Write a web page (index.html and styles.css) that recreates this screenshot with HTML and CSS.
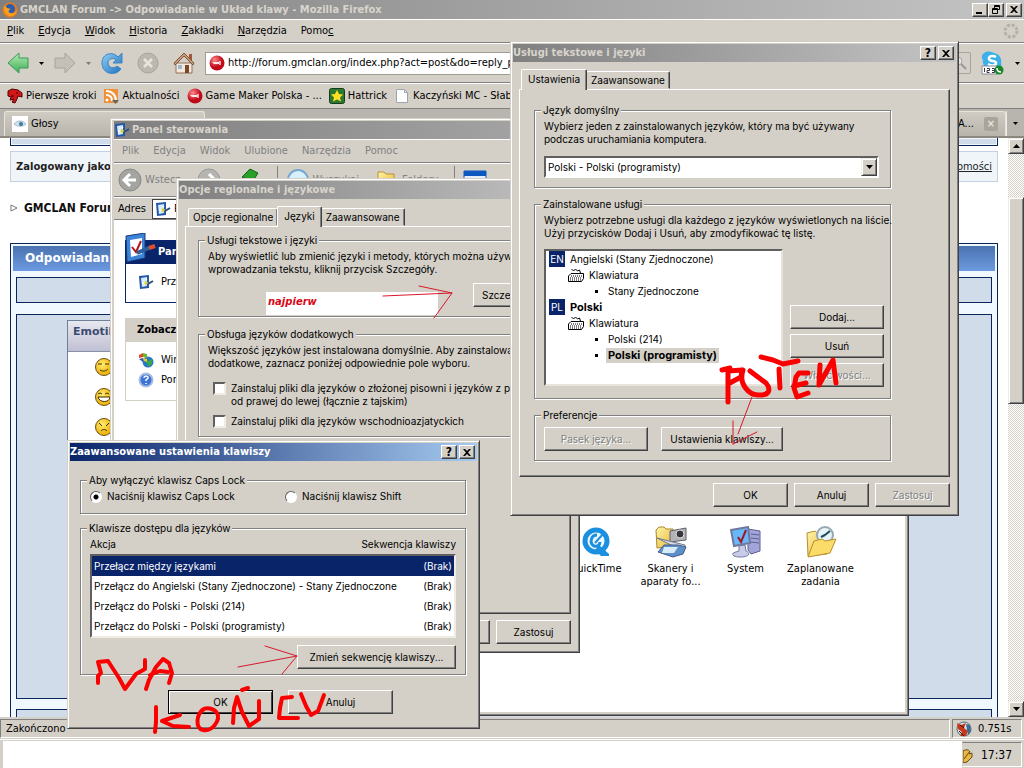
FILE: index.html
```
<!DOCTYPE html>
<html lang="pl">
<head>
<meta charset="utf-8">
<title>GMCLAN Forum</title>
<link rel="stylesheet" href="styles.css">
</head>
<body>
<svg class="defs" aria-hidden="true">
  <defs>
    <linearGradient id="gBlue" x1="0" y1="0" x2="1" y2="1"><stop offset="0" stop-color="#8fd0f5"/><stop offset="1" stop-color="#1f6fc0"/></linearGradient>
    <linearGradient id="gGreen" x1="0" y1="0" x2="0" y2="1"><stop offset="0" stop-color="#b4ecb0"/><stop offset="1" stop-color="#3fae58"/></linearGradient>
    <radialGradient id="gRed" cx=".35" cy=".3"><stop offset="0" stop-color="#ff8a90"/><stop offset="1" stop-color="#c00818"/></radialGradient>
    <radialGradient id="gFace" cx=".4" cy=".35"><stop offset="0" stop-color="#ffee70"/><stop offset="1" stop-color="#f0b818"/></radialGradient>
    <linearGradient id="gFold" x1="0" y1="0" x2="1" y2="1"><stop offset="0" stop-color="#fff3a8"/><stop offset="1" stop-color="#e8b83c"/></linearGradient>
    <symbol id="cross" viewBox="0 0 10 9"><path d="M1 1h2l2 2 2-2h2L6 4.500l3 3.500H7L5 6 3 8H1l3-3.500z" fill="#000"/></symbol>
    <symbol id="down" viewBox="0 0 5 3"><path d="M0 0h5L2.500 3z" fill="#000"/></symbol>
    <symbol id="panel" viewBox="0 0 16 16"><path d="M1 2l10-1v13L2 15z" fill="#2458a8"/><path d="M3 4l6-1v9l-5 1z" fill="#d8ecfc"/><path d="M4 8l2 2 3-5" stroke="#fff" fill="none"/><path d="M7 8l1-2 1 2 2 1-2 1-1 2-1-2-1-1z" fill="#d8d040"/><path d="M10 10l5-3" stroke="#2c4c80" stroke-width="2"/></symbol>
    <symbol id="ball" viewBox="0 0 16 16"><circle cx="8" cy="8" r="7.500" fill="url(#gRed)"/><path d="M3 7h7v2H5z" fill="#ffe8e8"/><path d="M11 6v4" stroke="#ffe0e0" stroke-width="1.500"/></symbol>
    <symbol id="kbd" viewBox="0 0 16 14"><path d="M3.500 1l2 2 2-2 2 2 2-1 1 3" fill="none" stroke="#000"/><path d="M3 5.500h12.500v5l-2 3H.5V8z" fill="#fff" stroke="#000"/><path d="M3 8h11M2 10h11M2 12h11" stroke="#000" stroke-dasharray="1 1"/></symbol>
  </defs>
</svg>

<main class="browser">
  <header class="title inactive browser-title">
    <svg class="i16" viewBox="0 0 16 16"><circle cx="8" cy="8" r="7.500" fill="#e87818"/><circle cx="8" cy="7" r="5" fill="#2c5cb0"/><path d="M3 3c-2 4-1 9 4 11 4 1 8-2 8-7-1 4-4 5-7 4-2-1-2-3 1-4L5 6z" fill="#f8a020"/></svg>
    <h1>GMCLAN Forum -&gt; Odpowiadanie w Układ klawy - Mozilla Firefox</h1>
    <span class="caps">
      <button aria-label="Minimalizuj"><svg class="i10" viewBox="0 0 10 9"><path d="M1 7h6v2H1z"/></svg></button><button aria-label="Przywróć"><svg class="i10" viewBox="0 0 10 9"><path d="M3.500.5h5v4h-2M3.500 3V.5M3 1.500h6" fill="none" stroke="#000"/><path d="M1.500 3.500h5v5h-5zM1 4.500h6" fill="none" stroke="#000"/></svg></button><button class="close" aria-label="Zamknij"><svg class="i10"><use href="#cross"/></svg></button>
    </span>
  </header>
  <nav class="menubar">
    <a href="#"><u>P</u>lik</a><a href="#"><u>E</u>dycja</a><a href="#"><u>W</u>idok</a><a href="#"><u>H</u>istoria</a><a href="#"><u>Z</u>akładki</a><a href="#"><u>N</u>arzędzia</a><a href="#">Pomo<u>c</u></a>
    <svg class="throbber" viewBox="0 0 16 16"><circle cx="8" cy="8" r="6" fill="none" stroke="#b4b0a8" stroke-width="3" stroke-dasharray="3 1.700"/></svg>
  </nav>
  <div class="navbar">
    <button aria-label="Wstecz"><svg class="i22" viewBox="0 0 22 22"><path d="M1 11L12 1v5h9v10h-9v5z" fill="url(#gGreen)" stroke="#3a9858"/></svg></button>
    <button aria-label="Historia wstecz"><svg class="dd"><use href="#down"/></svg></button>
    <button aria-label="Dalej"><svg class="i22" viewBox="0 0 22 22"><path d="M21 11L11 1v5H1v10h10v5z" fill="#c4c0b8" stroke="#a8a49c"/></svg></button>
    <button aria-label="Historia dalej"><svg class="dd dim"><use href="#down"/></svg></button>
    <button class="wide" aria-label="Odśwież"><svg class="i22" viewBox="0 0 22 22"><path d="M17 5l4-4v10H12l3-3c-3-3-8-1-8 3 0 5 6 6 9 3l4 3C14 25 1 22 1 11 1 1 12-1 17 5z" fill="url(#gBlue)" stroke="#3a84c4"/></svg></button>
    <button class="wide" aria-label="Zatrzymaj"><svg class="i22" viewBox="0 0 22 22"><circle cx="11" cy="11" r="10" fill="#bcb8b0" stroke="#a8a49c"/><path d="M7 7l8 8M15 7l-8 8" stroke="#e8e4dc" stroke-width="2.500"/></svg></button>
    <button aria-label="Strona startowa"><svg class="i22" viewBox="0 0 22 22"><path d="M3 11h16v10H3z" fill="#f4e8dc" stroke="#907058"/><path d="M16 2h3v6h-3z" fill="#a05838"/><path d="M11 1L1 11l1 2 9-9 9 9 1-2z" fill="#c89878" stroke="#805840"/><path d="M12 13h4v8h-4z" fill="#784828"/><path d="M5 13h4v4H5z" fill="#98b8d8"/></svg></button>
    <label class="url"><svg class="i16"><use href="#ball"/></svg><input aria-label="Adres" value="http://forum.gmclan.org/index.php?act=post&amp;do=reply_post"></label>
    <button class="search" aria-label="Szukaj"><svg class="i16" viewBox="0 0 16 16"><circle cx="6" cy="6" r="4" fill="#e4e4e4" stroke="#a4a4a4"/><path d="M9 9l5 5" stroke="#989898" stroke-width="2"/></svg></button>
    <button aria-label="Skype"><svg class="i24" viewBox="0 0 24 24"><path d="M2 3c4-4 9-2 11-1 6 1 8 6 7 10 2 6-4 8-8 6C4 19 1 13 2 9 0 7 1 4 2 3z" fill="#3cb0e8"/><path d="M15 6c-3-2-8-1-7 2s7 1 7 4-5 3-8 1" fill="none" stroke="#fff" stroke-width="2.500"/><path d="M1 15h15v8H1z" fill="#fff" stroke="#889"/><path d="M3.500 17v4M6 17.500h2.500v2H6v2h2.500M11 17.500h2.500v4H11M11 19.500h2.500" fill="none" stroke="#334"/><circle cx="18" cy="19" r="4.500" fill="#188828"/><path d="M16 17c0 3 1 4 4 4" stroke="#fff" stroke-width="1.500" fill="none"/></svg></button>
    <button aria-label="Menu Skype"><svg class="dd"><use href="#down"/></svg></button>
  </div>
  <nav class="bookmarks">
    <a href="#"><svg class="i16" viewBox="0 0 16 16"><path d="M1 3l4-2 6 1 4 3v4l-4-1-1 3-2 4-3-1 2-3-4 1 1-3-3-1z" fill="#d01818" stroke="#500"/><path d="M9 5h2M4 8h3" stroke="#300"/></svg>Pierwsze kroki</a>
    <a href="#"><svg class="i16" viewBox="0 0 16 16"><path d="M1 1h14v14H1z" fill="#f09038"/><circle cx="4" cy="12" r="1.500" fill="#fff"/><path d="M3 7c4 0 6 2 6 6M3 3c6 0 10 4 10 10" fill="none" stroke="#fff" stroke-width="2"/><path d="M9 12h7l-3.500 4z" fill="#666"/></svg>Aktualności</a>
    <a href="#"><svg class="i16"><use href="#ball"/></svg>Game Maker Polska - ...</a>
    <a href="#"><svg class="i16" viewBox="0 0 16 16"><rect x=".5" y=".5" width="15" height="15" rx="2" fill="#2c7830" stroke="#143c18"/><path d="M8 2l2 4 4 .5-3 3 1 4-4-2-4 2 1-4-3-3L6 6z" fill="#ffe020"/></svg>Hattrick</a>
    <a href="#"><svg class="i16" viewBox="0 0 16 16"><path d="M2.500 1.500h8l3 3v10h-11z" fill="#fff" stroke="#a0a4b0"/><path d="M10.500 1.500v3h3" fill="none" stroke="#a0a4b0"/></svg>Kaczyński MC - Słaby</a>
  </nav>
  <div class="tabstrip">
    <a class="fftab" href="#"><svg class="i16" viewBox="0 0 16 16"><path d="M0 0h16v16H0z" fill="#fff"/><path d="M2 8c3-4 9-4 12 0-3 3-9 3-12 0z" fill="#cfe0ec" stroke="#a8bccc"/><circle cx="9" cy="8" r="2" fill="#3878a0"/></svg>Głosy</a>
    <span class="fftab last"><b>A...</b><button class="tabclose" aria-label="Zamknij kartę">×</button></span>
    <button class="tablist" aria-label="Lista kart"><svg class="dd"><use href="#down"/></svg></button>
  </div>
  <div class="viewport">
    <section class="forum">
      <div class="strip top"></div>
      <div class="login"><strong>Zalogowany jako</strong><a href="#">Wiadomości</a></div>
      <p class="crumb"><svg class="tri" viewBox="0 0 8 8"><path d="M1 1l6 3-6 3z" fill="none" stroke="#777"/></svg>GMCLAN Forum</p>
      <div class="post">
        <h2>Odpowiadanie</h2>
        <div class="cell thin"></div>
        <div class="cell big">
          <div class="emo">
            <h3>Emotikony</h3>
            <svg class="face" viewBox="0 0 18 18"><circle cx="9" cy="9" r="8.500" fill="url(#gFace)" stroke="#6c5010"/><path d="M3 6h4M10 6h4M5 12c3 2 6 1 8-1" fill="none" stroke="#402c00"/></svg>
            <svg class="face" viewBox="0 0 18 18"><circle cx="9" cy="9" r="8.500" fill="url(#gFace)" stroke="#6c5010"/><path d="M3 6l2-1 2 1M10 6l2-1 2 1" fill="none" stroke="#402c00"/><path d="M3 9h12c0 6-11 6-12 0z" fill="#fff" stroke="#402c00"/></svg>
            <svg class="face" viewBox="0 0 18 18"><circle cx="9" cy="9" r="8.500" fill="url(#gFace)" stroke="#6c5010"/><path d="M4 5l3 3M14 5l-3 3M6 13c2-2 4-2 6 0" fill="none" stroke="#402c00"/></svg>
          </div>
        </div>
        <div class="cell foot"></div>
      </div>
    </section>
    <div class="scroll">
      <button aria-label="W górę"><svg class="ar" viewBox="0 0 7 4"><path d="M0 4h7L3.500 0z"/></svg></button>
      <span class="gap"></span><span class="thumb"></span><span class="rest"></span>
      <button aria-label="W dół"><svg class="ar" viewBox="0 0 7 4"><path d="M0 0h7L3.500 4z"/></svg></button>
    </div>
  </div>
  <footer class="status"><span class="sunk msg">Zakończono</span><span class="sunk time"><svg class="i16" viewBox="0 0 16 16"><circle cx="8" cy="8" r="7" fill="#d8e4ec" stroke="#506878"/><path d="M1 2l4 2 5-2-2 5 4 3-2 5H4l2-4-4-3z" fill="#c83818"/><path d="M10 3l4 1 1 6-3 4-1-5z" fill="#3c6c90"/><path d="M3 10l5 5M4 4l4 3" stroke="#301008"/></svg>0.751s</span></footer>
</main>
<footer class="taskbar"><div class="blank"></div><div class="tray"><svg class="pen" viewBox="0 0 10 16"><path d="M0 4c5-3 8 0 6 3l3-1v4l-5 5-4 1z" fill="#e8b840" stroke="#684c18"/><path d="M1 12l6-8" stroke="#684c18"/></svg><time>17:37</time></div></footer>

<section class="win cpanel">
  <header class="title inactive"><svg class="i16"><use href="#panel"/></svg><h2>Panel sterowania</h2></header>
  <nav class="menubar dimmed"><a href="#">Plik</a><a href="#">Edycja</a><a href="#">Widok</a><a href="#">Ulubione</a><a href="#">Narzędzia</a><a href="#">Pomoc</a></nav>
  <div class="cptools">
    <span class="tool"><svg class="i24" viewBox="0 0 24 24"><circle cx="12" cy="12" r="11" fill="#a4a4a0" stroke="#888"/><path d="M18 12H7M12 6l-6 6 6 6" fill="none" stroke="#fff" stroke-width="3"/></svg>Wstecz</span>
    <span class="tool fwd"><svg class="i24" viewBox="0 0 24 24"><circle cx="12" cy="12" r="11" fill="#b4b4b0" stroke="#999"/><path d="M6 12h11M12 6l6 6-6 6" fill="none" stroke="#fff" stroke-width="3"/></svg></span>
    <span class="tool up"><svg class="i24" viewBox="0 0 24 24"><path d="M2 10h20v12H2z" fill="#e8c850"/><path d="M5 9l8-8 8 4-5 8z" fill="#28a028" stroke="#146014"/></svg></span>
    <span class="tool sep"><svg class="i24" viewBox="0 0 24 24"><circle cx="12" cy="12" r="10" fill="#d8f0fc" stroke="#78a8d0" stroke-width="2"/></svg>Wyszukaj</span>
    <span class="tool"><svg class="i24" viewBox="0 0 24 24"><path d="M3 4h6l2 2h8v14H3z" fill="url(#gFold)" stroke="#b89030"/></svg>Foldery</span>
    <span class="tool sep"><svg class="i24" viewBox="0 0 24 24"><path d="M1 3h22v18H1z" fill="#e4ecf8" stroke="#0c58c0"/><path d="M1 3h22v5H1z" fill="#0c58c0"/></svg></span>
  </div>
  <div class="address"><label for="addr">Adres</label><span class="addrbox"><svg class="i16"><use href="#panel"/></svg><input id="addr" value="Panel sterowania"></span></div>
  <div class="cpbody">
    <aside class="side">
      <section class="navy"><svg class="big" viewBox="0 0 31 30"><path d="M1 3L20 0v25L2 29z" fill="#3c84d8" stroke="#18387c"/><path d="M5 7l12-2v16L6 24z" fill="#fff"/><path d="M7 14l4 5 5-11" fill="none" stroke="#b01818" stroke-width="2"/><path d="M12 20l14-6" stroke="#2c60a0" stroke-width="4"/><path d="M24 15l6-2" stroke="#e05028" stroke-width="4"/></svg><h3>Panel sterowania</h3><a href="#"><svg class="i16"><use href="#panel"/></svg>Przełącz do widoku</a></section>
      <section class="grey"><h3>Zobacz też</h3><a href="#"><svg class="i16" viewBox="0 0 16 16"><circle cx="10" cy="10" r="5.500" fill="#2878c8"/><path d="M7 8l4 1 3-2v5l-3 3z" fill="#38a848"/><path d="M1 3l4-2v4L1 6z" fill="#e04820"/><path d="M5 1l4 1v4L5 5z" fill="#68b830"/><path d="M1 7l4-1v4z" fill="#2c58c0"/><path d="M5 6l4 1v3L6 9z" fill="#f0c820"/></svg>Windows Update</a><a href="#"><svg class="i16" viewBox="0 0 16 16"><circle cx="8" cy="8" r="6.500" fill="#3c74d8" stroke="#a8bce0" stroke-width="2"/><path d="M6 6c0-3 5-2 4 0L8 8v1M8 11v1" fill="none" stroke="#fff" stroke-width="1.500"/></svg>Pomoc i obsługa</a></section>
    </aside>
    <div class="icons">
      <a href="#"><svg class="i32" viewBox="0 0 32 32"><circle cx="16" cy="15" r="11" fill="#eef8ff" stroke="#1c90e0" stroke-width="5"/><path d="M19 19l10 9v2h-8l-6-6z" fill="#1c90e0"/><path d="M17 9c-6 0-8 8-3 11 3 1 6-1 6-4" fill="none" stroke="#1c90e0" stroke-width="3"/><path d="M15 17l8-9" stroke="#1c90e0" stroke-width="2"/></svg>QuickTime</a>
      <a href="#"><svg class="i32" viewBox="0 0 32 32"><path d="M1 4l3-3h5l2 2h7v17L2 22z" fill="url(#gFold)" stroke="#a88828"/><path d="M15 5l16-3v12l-16 2z" fill="#b4b4b8" stroke="#606068"/><circle cx="25" cy="8" r="4" fill="#38383c" stroke="#ddd"/><path d="M2 12l28 7v3l-10-1z" fill="#d8dce4" stroke="#707888"/><path d="M3 26l6-7h14l8 2-3 7-10 3z" fill="#5c90c8" stroke="#445c80"/><path d="M9 21h14l-4 6H7z" fill="#d8ecf8"/></svg>Skanery i aparaty fo...</a>
      <a href="#"><svg class="i32" viewBox="0 0 32 32"><path d="M18 3l12 2v20l-9 3-3-4z" fill="#a0a4d8" stroke="#5c6090"/><path d="M21 8l8 1M21 12l8 1M21 16l8 1" stroke="#5c6090"/><path d="M1 4l17-3 2 16-16 3z" fill="#68b8f8" stroke="#7078a0" stroke-width="2"/><path d="M8 11l3 5 5-12" fill="none" stroke="#a01828" stroke-width="2"/><path d="M9 20l6-1 1 6c8 4-3 8-12 5-4-3 2-4 5-5z" fill="#c8cce8" stroke="#7078a0"/></svg>System</a>
      <a href="#"><svg class="i32" viewBox="0 0 32 32"><path d="M2 7l8-2 3 3h9v20L3 30z" fill="url(#gFold)" stroke="#b89030"/><circle cx="20" cy="9" r="8" fill="#e4f4f8" stroke="#98a8b0" stroke-width="2"/><path d="M20 9l5-4M20 9l-4 2" stroke="#204858" stroke-width="2"/><path d="M9 15l8-2 3 2 11-2-6 14-22 4z" fill="#fbdc68" stroke="#b89030"/></svg>Zaplanowane zadania</a>
    </div>
  </div>
</section>

<section class="win dlg regional">
  <header class="title inactive"><h2>Opcje regionalne i językowe</h2></header>
  <div class="dbody">
    <div class="tabs"><button>Opcje regionalne</button><button class="on">Języki</button><button>Zaawansowane</button></div>
    <div class="page">
      <fieldset><legend>Usługi tekstowe i języki</legend>
        <p>Aby wyświetlić lub zmienić języki i metody, których można używać do<br>wprowadzania tekstu, kliknij przycisk Szczegóły.</p>
        <div class="right"><button class="btn w75">Szczegóły...</button></div>
      </fieldset>
      <fieldset class="extra"><legend>Obsługa języków dodatkowych</legend>
        <p>Większość języków jest instalowana domyślnie. Aby zainstalować<br>dodatkowe, zaznacz poniżej odpowiednie pole wyboru.</p>
        <label class="opt"><input type="checkbox"><span>Zainstaluj pliki dla języków o złożonej pisowni i języków z pisownią<br>od prawej do lewej (łącznie z tajskim)</span></label>
        <label class="opt"><input type="checkbox"><span>Zainstaluj pliki dla języków wschodnioazjatyckich</span></label>
      </fieldset>
    </div>
    <div class="actions"><button class="btn w75">Anuluj</button><button class="btn w75">Zastosuj</button></div>
  </div>
</section>

<section class="win dlg services">
  <header class="title inactive"><h2>Usługi tekstowe i języki</h2><span class="caps"><button aria-label="Pomoc"><b>?</b></button><button class="close" aria-label="Zamknij"><svg class="i10"><use href="#cross"/></svg></button></span></header>
  <div class="dbody">
    <div class="tabs"><button class="on">Ustawienia</button><button>Zaawansowane</button></div>
    <div class="page">
      <fieldset><legend>Język domyślny</legend>
        <p>Wybierz jeden z zainstalowanych języków, który ma być używany<br>podczas uruchamiania komputera.</p>
        <div class="combo"><select aria-label="Język domyślny"><option>Polski - Polski (programisty)</option></select><span class="arrow"><svg class="ar" viewBox="0 0 7 4"><path d="M0 0h7L3.500 4z"/></svg></span></div>
      </fieldset>
      <fieldset><legend>Zainstalowane usługi</legend>
        <p>Wybierz potrzebne usługi dla każdego z języków wyświetlonych na liście.<br>Użyj przycisków Dodaj i Usuń, aby zmodyfikować tę listę.</p>
        <div class="split">
          <ul class="tree">
            <li><i class="lang">EN</i>Angielski (Stany Zjednoczone)</li>
            <li class="l2"><svg class="kb"><use href="#kbd"/></svg>Klawiatura</li>
            <li class="l3"><i class="dot"></i><span>Stany Zjednoczone</span></li>
            <li><i class="lang">PL</i><b>Polski</b></li>
            <li class="l2"><svg class="kb"><use href="#kbd"/></svg>Klawiatura</li>
            <li class="l3"><i class="dot"></i><span>Polski (214)</span></li>
            <li class="l3"><i class="dot"></i><b class="sel">Polski (programisty)</b></li>
          </ul>
          <div class="col"><button class="btn">Dodaj...</button><button class="btn">Usuń</button><button class="btn" disabled>Właściwości...</button></div>
        </div>
      </fieldset>
      <fieldset><legend>Preferencje</legend>
        <div class="prefs"><button class="btn w104" disabled>Pasek języka...</button><button class="btn w122">Ustawienia klawiszy...</button></div>
      </fieldset>
    </div>
    <div class="actions"><button class="btn w75">OK</button><button class="btn w75">Anuluj</button><button class="btn w75" disabled>Zastosuj</button></div>
  </div>
</section>

<section class="win dlg keys">
  <header class="title active"><h2>Zaawansowane ustawienia klawiszy</h2><span class="caps"><button aria-label="Pomoc"><b>?</b></button><button class="close" aria-label="Zamknij"><svg class="i10"><use href="#cross"/></svg></button></span></header>
  <div class="kbody">
    <fieldset><legend>Aby wyłączyć klawisz Caps Lock</legend>
      <div class="radios"><label><input type="radio" name="caps" checked>Naciśnij klawisz Caps Lock</label><label><input type="radio" name="caps">Naciśnij klawisz Shift</label></div>
    </fieldset>
    <fieldset><legend>Klawisze dostępu dla języków</legend>
      <table>
        <thead><tr><th>Akcja</th><th>Sekwencja klawiszy</th></tr></thead>
        <tbody>
          <tr class="on"><td>Przełącz między językami</td><td>(Brak)</td></tr>
          <tr><td>Przełącz do Angielski (Stany Zjednoczone) - Stany Zjednoczone</td><td>(Brak)</td></tr>
          <tr><td>Przełącz do Polski - Polski (214)</td><td>(Brak)</td></tr>
          <tr><td>Przełącz do Polski - Polski (programisty)</td><td>(Brak)</td></tr>
        </tbody>
      </table>
      <div class="right"><button class="btn w159">Zmień sekwencję klawiszy...</button></div>
    </fieldset>
    <div class="okrow"><button class="btn w105 default">OK</button><button class="btn w105">Anuluj</button></div>
  </div>
</section>

<div class="note">najpierw</div>
<svg class="ink" viewBox="0 0 1024 768" fill="none" stroke-linecap="round" stroke-linejoin="round">
  <g stroke="#d81828" stroke-width="1">
    <path d="M383 296L452 293M419 286L452 293L434 318"/>
    <path d="M238 667L297 656M265 646L297 656L282 674"/>
    <path d="M752 397L738 434M757 432L733 444M733 421V444"/>
  </g>
  <g stroke="#fa0000" stroke-width="4">
    <path d="M98 683V676L101 673L98 662L108 661L119 678L125 689L136 674L145 669V660"/>
    <path d="M146 689L149 680L156 667L163 659L169 663L172 673L169 683M150 675L160 671L168 672"/>
    <path d="M156 707V722L155 732M180 715L162 721L173 726L189 727"/>
    <path d="M204 709C196 714 195 728 203 730C212 732 221 720 217 713C214 708 206 707 202 710"/>
    <path d="M233 723L234 708L237 697L242 712L249 726L259 719V701M242 690L248 688"/>
    <path d="M292 697L282 698L280 708L279 718H298M301 694L306 706L311 715L318 711L324 695"/>
  </g>
  <g stroke="#fa0000" stroke-width="5">
    <path d="M722 370L730 368M728 370V402M729 371L742 370L741 377L728 384"/>
    <path d="M743 370C738 385 750 395 758 395C770 396 771 389 766 383L750 371"/>
    <path d="M761 357L773 360L783 364L798 361M779 369L780 388"/>
    <path d="M808 373H799L796 377L794 388L797 397L808 393M794 386L806 383"/>
    <path d="M820 365L819 385L833 360L836 383"/>
  </g>
</svg>
</body>
</html>
```
FILE: styles.css
```
* { box-sizing: border-box; }
html, body { height: 100%; }
body {
  margin: 0;
  display: flex;
  flex-direction: column;
  position: relative;
  overflow: hidden;
  background: #d4d0c8;
  color: #000;
  font: 11px/14px "DejaVu Sans Condensed", "DejaVu Sans", sans-serif;
}
h1, h2, h3, p, ul { margin: 0; padding: 0; font-size: 11px; }
p { font-weight: normal; }
a { color: inherit; text-decoration: none; }
button, input, select { font: inherit; color: inherit; margin: 0; }
button { border: 0; padding: 0; background: none; display: flex; align-items: center; justify-content: center; }
svg { flex: none; display: block; }
.defs { position: absolute; width: 0; height: 0; }
.i10 { width: 10px; height: 9px; }
.i16 { width: 16px; height: 16px; }
.i22 { width: 22px; height: 22px; }
.i24 { width: 24px; height: 24px; }
.i32 { width: 32px; height: 32px; }
.dd { width: 5px; height: 3px; }
.dim { opacity: .4; }
.ar { width: 7px; height: 4px; }

/* title bars */
.title { display: flex; align-items: center; flex: none; height: 18px; padding: 0 2px 0 0; white-space: nowrap; }
.title h1, .title h2 { flex: 1; font-weight: bold; }
.title .i16 { margin-right: 2px; }
.inactive { background: linear-gradient(90deg, #808080, #c4c4c4); color: #d8d4cc; }
.active { background: linear-gradient(90deg, #0a246a, #a6caf0); color: #fff; }
.caps { display: flex; color: #000; }
.caps button {
  width: 16px; height: 14px; background: #d4d0c8;
  border: 1px solid; border-color: #fff #404040 #404040 #fff;
  box-shadow: inset -1px -1px #808080;
}
.caps b { font: bold 12px/12px "DejaVu Sans Condensed", sans-serif; }
.caps .close { margin-left: 2px; }

/* browser */
.browser { flex: 1; min-height: 0; display: flex; flex-direction: column; }
.browser-title { height: 19px; padding: 0 2px; }
.menubar { display: flex; align-items: center; gap: 14px; height: 24px; flex: none; padding: 0 5px 0 7px; border-top: 1px solid #fff; border-bottom: 1px solid #808080; }
.throbber { width: 16px; height: 16px; margin-left: auto; }
.navbar { display: flex; align-items: center; gap: 10px; height: 40px; flex: none; padding: 0 4px 0 7px; border-top: 1px solid #fff; border-bottom: 1px solid #808080; }
.navbar .wide { margin-right: 4px; }
.url { flex: 1; display: flex; align-items: center; gap: 3px; height: 23px; padding-left: 3px; background: #fff; border: 1px solid #a09c94; }
.url input { flex: 1; border: 0; padding: 0; background: none; outline: 0; }
.navbar .search { width: 22px; height: 22px; border: 1px solid #a8a49c; border-radius: 2px; }
.bookmarks { display: flex; align-items: center; gap: 7px; height: 26px; flex: none; padding: 0 7px; border-top: 1px solid #fff; border-bottom: 1px solid #808080; white-space: nowrap; }
.bookmarks a { display: flex; align-items: center; gap: 3px; }
.tabstrip { display: flex; align-items: flex-end; height: 29px; flex: none; padding-left: 4px; background: #b8b4ae; border-bottom: 2px solid #8c8880; }
.fftab { display: flex; align-items: center; gap: 3px; width: 201px; height: 25px; padding: 0 7px; border: 1px solid #e8e4dc; border-bottom: 0; border-radius: 3px 3px 0 0; background: linear-gradient(#d0ccc4, #b8b4ac); }
.fftab.last { margin-left: auto; width: 100px; justify-content: flex-end; gap: 10px; }
.fftab b { font-weight: normal; }
.tabclose { width: 14px; height: 14px; border-radius: 2px; background: #a8a49c; color: #e8e4dc; font-weight: bold; }
.tablist { width: 18px; height: 25px; border-left: 1px solid #f0ece4; }
.viewport { flex: 1; min-height: 0; display: flex; background: #fff; }
.forum { flex: 1; display: flex; flex-direction: column; padding: 0 10px; }
.strip.top { height: 8px; border: 1px solid #0c2458; border-top: 0; background: #d0dcea; box-shadow: inset 0 0 0 1px #f0f8ff; }
.login { display: flex; justify-content: space-between; align-items: center; height: 31px; margin-top: 5px; padding: 0 5px; background: #f0f5fa; border: 1px solid #c2d0e0; color: #222; }
.login strong { font: bold 10px/14px "DejaVu Sans", sans-serif; }
.login a { text-decoration: underline; }
.crumb { display: flex; align-items: center; gap: 6px; padding: 19px 0 28px; font: bold 12px/14px "DejaVu Sans Condensed", sans-serif; color: #111; }
.tri { width: 8px; height: 8px; }
.post { flex: 1; display: flex; flex-direction: column; padding: 2px 2px 0; border: 1px solid #0c2458; border-bottom: 0; background: #f0f8ff; }
.post h2 { height: 25px; padding: 0 12px; font: bold 12px/25px "DejaVu Sans", sans-serif; color: #fff; background: linear-gradient(#4a72b0, #6c9ae0); }
.cell { border: 1px solid #0c2458; background: #d0dcea; margin: 0 3px; }
.thin { height: 26px; margin-top: 6px; }
.big { flex: 1; margin-top: 11px; padding: 5px 50px; }
.foot { height: 8px; margin-top: 10px; border-bottom: 0; }
.emo { width: 180px; height: 100%; border: 1px solid #708098; border-bottom: 0; background: #fff; }
.emo h3 { height: 31px; padding: 0 5px; font: bold 11px/22px "DejaVu Sans", sans-serif; color: #3c4c70; background: linear-gradient(#e8e8f0, #c0c0d4); border-bottom: 1px solid #8890a8; }
.face { width: 18px; height: 18px; margin: 6px 0 12px 27px; }
.scroll { width: 16px; display: flex; flex-direction: column; background: repeating-conic-gradient(#fff 0 25%, #d4d0c8 0 50%) 0 0/2px 2px; }
.scroll button, .thumb, .arrow { background: #d4d0c8; border: 1px solid; border-color: #f0ece4 #404040 #404040 #f0ece4; box-shadow: inset 1px 1px #fff, inset -1px -1px #808080; }
.scroll button { height: 16px; }
.gap { flex: 43; }
.thumb { flex: 206; }
.rest { flex: 298; }
.status { display: flex; gap: 2px; height: 22px; flex: none; padding: 2px 2px 1px 0; }
.sunk { display: flex; align-items: center; border: 1px solid; border-color: #808080 #fff #fff #808080; padding: 0 5px; }
.msg { flex: 1; }
.time { width: 70px; padding: 0 3px; gap: 6px; }
.taskbar { height: 29px; flex: none; display: flex; padding: 1px 2px 0 3px; border-top: 1px solid #fff; }
.blank { flex: 1; background: #fff; }
.tray { display: flex; align-items: center; gap: 8px; width: 60px; margin: 1px 0; padding-right: 8px; border: 1px solid; border-color: #808080 #fff #fff transparent; }
.tray time { font-size: 12px; }
.pen { width: 10px; height: 16px; }

/* floating windows */
.win { position: absolute; display: flex; flex-direction: column; padding: 2px; background: #d4d0c8; border: 1px solid; border-color: #d4d0c8 #404040 #404040 #d4d0c8; box-shadow: inset 1px 1px #fff, inset -1px -1px #808080; }
.cpanel { left: 110px; top: 118px; width: 799px; height: 598px; padding: 2px 3px 3px; }
.regional { left: 176px; top: 178px; width: 404px; height: 475px; }
.services { left: 510px; top: 41px; width: 449px; }
.keys { left: 67px; top: 440px; width: 413px; }

/* control panel */
.cpanel .menubar { padding-left: 8px; }
.dimmed { color: #808080; }
.cptools { display: flex; align-items: center; height: 34px; flex: none; padding: 0 4px; gap: 16px; color: #808080; border-bottom: 1px solid #808080; border-top: 1px solid #fff; }
.tool { display: flex; align-items: center; gap: 3px; }
.sep { border-left: 1px solid #808080; padding-left: 8px; height: 28px; }
.address { display: flex; align-items: center; gap: 6px; height: 23px; flex: none; padding: 0 4px; border-bottom: 1px solid #808080; border-top: 1px solid #fff; }
.addrbox { flex: 1; display: flex; align-items: center; gap: 3px; height: 20px; padding-left: 2px; background: #fff; border: 1px solid #404040; }
.addrbox input { flex: 1; border: 0; padding: 0; background: none; }
.cpbody { flex: 1; display: flex; background: #fff; }
.side { width: 186px; padding: 20px 0 0 11px; display: flex; flex-direction: column; gap: 15px; }
.side section { border: 1px solid #0a246a; padding-bottom: 10px; position: relative; }
.side h3 { margin: -1px -1px 8px; height: 24px; line-height: 24px; padding-left: 33px; background: #0a246a; color: #fff; white-space: nowrap; }
.side a { display: flex; align-items: center; gap: 7px; height: 20px; padding-left: 12px; white-space: nowrap; overflow: hidden; }
.side .grey { border-color: #d4d0c8; }
.grey h3 { background: #d4d0c8; color: #000; padding-left: 12px; }
.side .big { position: absolute; left: -1px; top: -8px; width: 31px; height: 30px; padding: 0; margin: 0; }
.icons { flex: 1; display: flex; align-items: flex-start; padding: 306px 0 0 258px; }
.icons a { width: 75px; display: flex; flex-direction: column; align-items: center; gap: 4px; padding: 0 2px; text-align: center; line-height: 13px; }

/* dialogs */
.dlg { font: 10px/13px Inter, "Liberation Sans", sans-serif; }
.dlg .title { font: 11px/14px "DejaVu Sans Condensed", sans-serif; }
.dbody { flex: 1; display: flex; flex-direction: column; padding: 7px 6px 6px; }
.tabs { display: flex; align-items: flex-end; padding: 0 3px; }
.tabs button { height: 18px; padding: 0 4px; background: #d4d0c8; border: 1px solid; border-color: #fff #404040 transparent #fff; border-radius: 2px 2px 0 0; box-shadow: inset -1px 0 #808080; }
.tabs .on { height: 21px; margin: 0 -1px -1px -1px; padding: 0 6px 2px; z-index: 1; border-bottom: 0; }
.page { flex: 1; padding: 13px 58px 15px 14px; display: flex; flex-direction: column; gap: 9px; border: 1px solid; border-color: #fff #404040 #404040 #fff; box-shadow: inset -1px -1px #808080; }
fieldset { margin: 0; min-width: 0; padding: 3px 9px 9px; border: 1px solid #808080; box-shadow: 1px 1px #fff, inset 1px 1px #fff; }
legend { padding: 0 2px; margin-left: -3px; height: 14px; line-height: 14px; background: #d4d0c8; }
.dlg p { font-size: 10px; white-space: nowrap; }
.btn { height: 24px; background: #d4d0c8; border: 1px solid; border-color: #fff #404040 #404040 #fff; box-shadow: inset -1px -1px #808080; white-space: nowrap; }
.btn:disabled { color: #808080; text-shadow: 1px 1px #fff; }
.w75 { width: 75px; }
.w104 { width: 104px; }
.w105 { width: 105px; }
.w122 { width: 122px; }
.w159 { width: 159px; }
.actions { display: flex; justify-content: flex-end; gap: 6px; padding-top: 6px; }
.right { display: flex; justify-content: flex-end; padding-top: 7px; }

.combo { position: relative; margin: 10px 1px 0 0; width: 335px; }
.combo select { appearance: none; width: 100%; height: 22px; padding: 0 2px; border: 2px solid; border-color: #606060 #fff #fff #606060; border-radius: 0; background: #fff; }
.arrow { position: absolute; right: 2px; top: 2px; width: 16px; height: 18px; display: flex; align-items: center; justify-content: center; pointer-events: none; }
.split { display: flex; justify-content: space-between; margin: 9px -3px 2px 0; }
.tree { width: 239px; height: 137px; list-style: none; font-size: 10px; background: #fff; border: 2px solid; border-color: #606060 #e8e4dc #e8e4dc #606060; }
.tree li { display: flex; align-items: center; height: 16px; padding-left: 3px; gap: 5px; }
.tree b { font-size: 11px; }
.tree .l2 { padding-left: 22px; }
.tree .l3 { padding-left: 49px; gap: 10px; }
.lang { width: 16px; height: 16px; line-height: 16px; text-align: center; background: #0a246a; color: #fff; font-style: normal; }
.kb { width: 16px; height: 14px; }
.dot { width: 3px; height: 3px; background: #000; }
.sel { background: #d4d0c8; padding: 1px 2px; margin-left: -2px; }
.col { display: flex; flex-direction: column; justify-content: flex-start; gap: 5px; width: 94px; margin-top: 56px; }
.prefs { display: flex; gap: 13px; padding: 2px 0 0; }

.regional .page { padding: 6px 12px; gap: 10px; }
.extra { padding-bottom: 8px; }
.opt { display: flex; align-items: flex-start; gap: 5px; margin: 12px 0 0 5px; white-space: nowrap; }
.opt + .opt { margin-top: 7px; }
.opt input { appearance: none; flex: none; width: 13px; height: 13px; background: #fff; border: 2px solid; border-color: #606060 #f0ece4 #f0ece4 #606060; }

.kbody { padding: 12px 11px 9px 10px; }
.kbody fieldset { padding: 3px 9px 5px; margin-bottom: 7px; }
.radios { display: grid; grid-template-columns: 195px 1fr; padding-bottom: 5px; }
.radios label { display: flex; align-items: center; gap: 5px; }
.radios input { appearance: none; width: 12px; height: 12px; border-radius: 50%; border: 1px solid; border-color: #606060 #fff #fff #606060; background: #fff; }
.radios input:checked { background: radial-gradient(#000 0 2px, #fff 3px); }
table, thead, tbody { display: block; font-size: 10px; }
tbody { margin-top: 3px; border: 2px solid; border-color: #606060 #f0ece4 #f0ece4 #606060; background: #fff; }
tr { display: flex; justify-content: space-between; align-items: center; }
tbody tr { height: 20px; padding: 0 2px; }
th { padding: 0; font-weight: normal; }
td { padding: 0; }
tr.on { background: #0a246a; color: #fff; }
.okrow { display: flex; gap: 15px; margin: 15px 0 3px; padding-left: 88px; }
.default { border-color: #000; box-shadow: inset 1px 1px #fff, inset -1px -1px #404040; }

/* hand-drawn notes */
.note { position: absolute; left: 266px; top: 292px; width: 172px; height: 23px; padding-left: 2px; background: #fff; color: #d80818; font: italic bold 10px/19px "DejaVu Sans", sans-serif; }
.ink { position: absolute; left: 0; top: 0; width: 1024px; height: 768px; pointer-events: none; }
```
